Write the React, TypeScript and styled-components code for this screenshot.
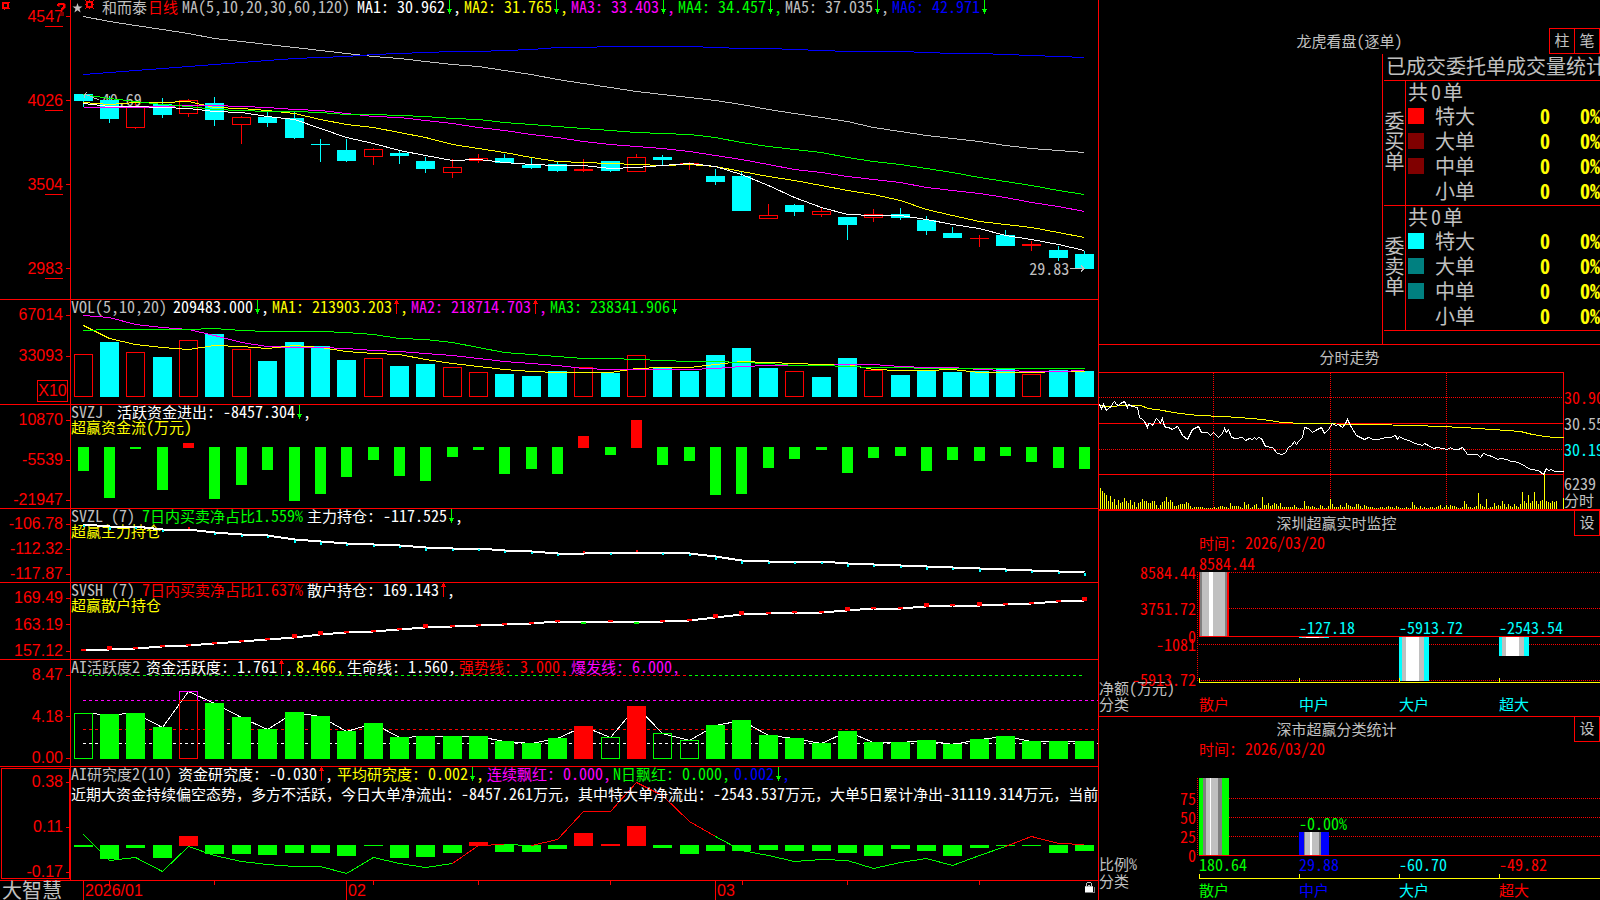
import React from "react";
import styled, { createGlobalStyle } from "styled-components";

const C = {
  red: "#ff0000",
  green: "#00ff00",
  cyan: "#00ffff",
  yellow: "#ffff00",
  magenta: "#ff00ff",
  blue: "#0000ff",
  gray: "#c0c0c0",
  dim: "#808080",
  white: "#ffffff",
};

const CJK = `"Noto Sans CJK SC", sans-serif`;

const GlobalStyle = createGlobalStyle`
  *, *::before, *::after { box-sizing: border-box; }
  html, body { margin: 0; padding: 0; background: #000; }
  body { color: ${C.gray}; font-family: ${CJK}; font-size: 15px; line-height: 13px; overflow: hidden; }
`;

/* ---------- text ---------- */

const Latin = styled.span`
  font-size: 16px;
  line-height: 13px;
  font-feature-settings: "hwid" 1;
`;

const LatinSvg = styled.tspan`
  font-size: 16px;
  font-feature-settings: "hwid" 1;
`;

const runs = (text: string) => text.split(/([\x20-\x7e]+)/).filter(Boolean);
const isLatin = (s: string) => /^[\x20-\x7e]/.test(s);

const Txt = ({ children }: { children: string }) => (
  <>{runs(children).map((r, i) => (isLatin(r) ? <Latin key={i}>{r}</Latin> : r))}</>
);

const SvgText = styled.text`
  font-family: ${CJK};
  font-size: 15px;
  white-space: pre;
`;

type LabelProps = { x: number; y: number; fill: string; end?: boolean; children: string };
const Label = ({ x, y, fill, end, children }: LabelProps) => (
  <SvgText x={x} y={y + 5} fill={fill} textAnchor={end ? "end" : "start"}>
    {runs(children).map((r, i) => (isLatin(r) ? <LatinSvg key={i}>{r}</LatinSvg> : r))}
  </SvgText>
);

/* ---------- page layout ---------- */

const Page = styled.main`
  display: grid;
  grid-template-columns: minmax(0, 1098fr) minmax(0, 502fr);
  height: 100vh;
  background: #000;
`;

const Charts = styled.div`
  display: grid;
  grid-template-rows:
    minmax(0, 300fr) minmax(0, 105fr) minmax(0, 104fr) minmax(0, 74fr)
    minmax(0, 77fr) minmax(0, 107fr) minmax(0, 114fr) minmax(0, 19fr);
  min-width: 0;
`;

const Side = styled.aside`
  display: grid;
  grid-template-rows: minmax(0, 345fr) minmax(0, 166fr) minmax(0, 206fr) minmax(0, 183fr);
  min-width: 0;
  border-left: 1px solid ${C.red};
`;

const Panel = styled.section`
  display: grid;
  grid-template-columns: 71px minmax(0, 1fr);
  min-height: 0;
  border-bottom: 1px solid ${C.red};
`;

const Axis = styled.div<{ $top: number; $bottom: number; $boxed?: boolean }>`
  position: relative;
  display: flex;
  flex-direction: column;
  justify-content: space-between;
  min-height: 0;
  padding: ${(p) => p.$top}px 0 ${(p) => p.$bottom}px;
  border-right: 1px solid ${C.red};
  outline: ${(p) => (p.$boxed ? `1px solid ${C.red}` : "none")};
  outline-offset: -2px;
`;

const AxisGroup = styled.div`
  display: flex;
  flex-direction: column;
  gap: 25px;
`;

const Tick = styled.div`
  display: flex;
  align-items: center;
  justify-content: flex-end;
  gap: 3px;
  height: 16px;
  color: ${C.red};
  font: 16px/16px "Liberation Sans", Arial, sans-serif;
  &::after {
    content: "";
    width: 4px;
    height: 1px;
    background: ${C.red};
  }
`;

const Cents = styled.span`
  height: 18px;
  border-bottom: 1px solid ${C.red};
`;
const Whole = styled.span`
  display: flex;
  height: 14px;
`;

const Unit = styled.div`
  align-self: flex-end;
  width: 31px;
  height: 22px;
  margin-right: 2px;
  border: 1px solid ${C.red};
  color: ${C.red};
  font: 16px/20px "Liberation Sans", Arial, sans-serif;
  text-align: center;
`;

const CornerIcons = styled.svg`
  position: absolute;
  top: 0;
  left: 0;
`;

const Plot = styled.div`
  position: relative;
  display: grid;
  grid-template: minmax(0, 1fr) / minmax(0, 1fr);
  min-width: 0;
`;

const Canvas = styled.svg`
  grid-area: 1 / 1;
  position: relative;
  display: block;
  width: 100%;
  height: 100%;
  shape-rendering: crispEdges;
`;

const Head = styled.header`
  grid-area: 1 / 1;
  position: relative;
  align-self: start;
  white-space: pre;
`;

const Legend = styled.div`
  display: flex;
  height: 15px;
`;

const Entry = styled.span<{ $w: number; $c: string }>`
  flex: none;
  display: flex;
  width: ${(p) => p.$w}px;
  height: 15px;
  color: ${(p) => p.$c};
`;

const Caption = styled.div`
  height: 15px;
  color: ${C.yellow};
`;

const Message = styled.p`
  height: 15px;
  margin: 5px 0 0;
  color: ${C.white};
`;

const Price = styled.span<{ $x: number; $y: number }>`
  position: absolute;
  left: ${(p) => p.$x}%;
  top: ${(p) => p.$y}%;
  white-space: pre;
`;

const Arrow = ({ up }: { up?: boolean }) => (
  <svg width="8" height="14" viewBox="0 0 8 14" shapeRendering="crispEdges">
    {up ? (
      <path d="M4 0h1v1h1v2h1v1H5v10H4V4H2V3h1V1h1z" fill={C.red} />
    ) : (
      <path d="M4 0h1v9h2v1H6v2H5v2H4v-2H3v-2H2V9h2z" fill={C.green} />
    )}
  </svg>
);

type Item = { w: number; c: string; t: string; dir?: "up" | "down"; tail?: string };
const Entries = ({ items }: { items: Item[] }) => (
  <>
    {items.map((it) => (
      <Entry key={it.t} $w={it.w} $c={it.c}>
        <span>
          <Txt>{it.t}</Txt>
        </span>
        {it.dir && <Arrow up={it.dir === "up"} />}
        {it.tail && (
          <span>
            <Txt>{it.tail}</Txt>
          </span>
        )}
      </Entry>
    ))}
  </>
);

/* ---------- chart primitives ---------- */

const cx = (i: number) => Math.floor(83.21 + i * 26.35);

type Pt = [number, number];
const Poly = ({ pts, c, w = 1 }: { pts: Pt[]; c: string; w?: number }) => (
  <polyline
    points={pts.map(([i, y]) => `${cx(i) + 0.5},${y + 0.5}`).join(" ")}
    fill="none"
    stroke={c}
    strokeWidth={w}
  />
);
const series = (ys: number[], from = 0): Pt[] => ys.map((y, i) => [i + from, y]);

const Bar = ({ i, y0, y1, c, hollow, w = 19 }: { i: number; y0: number; y1: number; c: string; hollow?: boolean; w?: number }) => {
  const x = cx(i) - (w - 1) / 2;
  return hollow ? (
    <rect x={x + 0.5} y={y0 + 0.5} width={w - 1} height={y1 - y0 - 1} fill="none" stroke={c} />
  ) : (
    <rect x={x} y={y0} width={w} height={y1 - y0} fill={c} />
  );
};

const Chart = ({ top, height, children }: { top: number; height: number; children: React.ReactNode }) => (
  <Canvas viewBox={`71 ${top} 1027 ${height}`} preserveAspectRatio="none">
    {children}
  </Canvas>
);

/* ---------- data ---------- */

/* rise (1) or fall (0), body top, body bottom, high, low */
const candles: number[][] = [
  [0, 94, 101, 94, 107], [0, 100, 119, 96, 123], [1, 107, 128, 103, 129], [0, 104, 115, 98, 118],
  [1, 100, 114, 99, 117], [0, 103, 120, 97, 126], [1, 117, 125, 116, 144], [0, 117, 123, 112, 127],
  [0, 118, 138, 112, 139], [0, 144, 145, 139, 162], [0, 150, 161, 139, 162], [1, 149, 157, 148, 165],
  [0, 153, 156, 151, 164], [0, 161, 169, 157, 173], [1, 167, 173, 159, 178], [1, 158, 161, 154, 163],
  [0, 158, 163, 154, 163], [0, 165, 168, 158, 169], [0, 164, 171, 162, 172], [1, 169, 171, 159, 172],
  [0, 161, 171, 161, 172], [1, 157, 172, 154, 172], [0, 157, 160, 155, 165], [1, 163, 164, 162, 170],
  [0, 176, 182, 169, 185], [0, 176, 211, 172, 211], [1, 215, 219, 204, 219], [0, 205, 212, 204, 216],
  [1, 211, 215, 207, 217], [0, 217, 225, 217, 240], [1, 214, 218, 209, 222], [0, 214, 218, 208, 220],
  [0, 220, 231, 216, 235], [0, 233, 238, 227, 238], [1, 238, 239, 235, 247], [0, 235, 246, 230, 246],
  [1, 244, 246, 241, 251], [0, 250, 258, 246, 261], [0, 254, 269, 251, 269],
];

const ma60 = series([16, 21, 25, 29, 33, 38, 41, 44, 47, 50, 53, 56, 58, 61, 64, 66, 70, 74, 79, 83, 87, 91, 94, 97, 100, 104, 109, 113, 117, 121, 127, 131, 135, 138, 141, 145, 148, 150, 152]);
const ma120 = series([74, 72, 70, 68, 66, 64, 62, 60, 58, 57, 56, 54, 53, 52, 51, 51, 50, 49, 47, 47, 46, 46, 46, 46, 47, 48, 48, 49, 50, 51, 51, 51, 52, 53, 53, 54, 55, 56, 57]);
const ma30 = series([94, 98, 101, 104, 106, 109, 110, 111, 111, 112, 114, 114, 115, 116, 118, 119, 122, 124, 126, 128, 130, 132, 133, 134, 137, 142, 146, 149, 152, 157, 161, 164, 168, 172, 177, 181, 185, 190, 194]);
const ma20 = series([107, 107, 107, 106, 105, 105, 106, 107, 109, 110, 113, 116, 117, 120, 123, 127, 130, 134, 137, 141, 144, 146, 148, 151, 155, 159, 164, 169, 172, 176, 179, 182, 187, 190, 193, 197, 202, 206, 211]);
const ma10 = series([102, 104, 102, 102, 101, 107, 108, 110, 113, 119, 124, 127, 132, 137, 144, 148, 152, 157, 161, 162, 163, 164, 165, 164, 166, 171, 176, 180, 185, 190, 194, 200, 209, 215, 221, 224, 227, 232, 237]);
const ma5 = series([103, 106, 106, 107, 108, 111, 112, 116, 119, 128, 137, 143, 150, 155, 160, 159, 162, 164, 165, 165, 168, 167, 165, 163, 166, 174, 185, 197, 207, 214, 215, 215, 219, 224, 228, 235, 239, 244, 250]);

const volTop = [354, 342, 352, 357, 340, 334, 349, 361, 342, 346, 360, 358, 366, 364, 367, 372, 374, 376, 371, 367, 373, 355, 368, 371, 355, 348, 368, 371, 377, 358, 370, 375, 371, 372, 371, 369, 374, 370, 371];
const volRise = [0, 2, 4, 6, 11, 14, 15, 19, 21, 27, 30, 36];
const vol5 = series([325, 338, 344, 347, 349, 345, 346, 348, 345, 347, 351, 353, 354, 359, 363, 366, 369, 371, 372, 372, 372, 368, 367, 367, 364, 361, 362, 363, 364, 364, 369, 370, 370, 369, 372, 372, 372, 371, 371]);
const vol10 = series([315, 317, 324, 327, 329, 335, 342, 346, 347, 347, 348, 350, 351, 353, 355, 358, 361, 363, 365, 368, 369, 369, 369, 369, 368, 366, 365, 365, 365, 364, 364, 366, 367, 367, 369, 370, 371, 371, 370]);
const vol20 = series([330, 329, 329, 329, 329, 328, 330, 331, 331, 331, 332, 334, 338, 339, 342, 347, 352, 354, 356, 358, 358, 359, 360, 361, 361, 362, 363, 365, 365, 366, 367, 367, 368, 368, 368, 368, 368, 368, 368]);

const flow = [471, 498, 449, 490, 443, 499, 485, 470, 501, 494, 477, 460, 476, 481, 457, 450, 474, 469, 474, 436, 455, 420, 465, 461, 495, 494, 468, 459, 450, 473, 458, 456, 471, 460, 461, 456, 462, 468, 469];

const mainHold = [524, 526, 526, 529, 529, 532, 534, 535, 539, 541, 543, 544, 545, 547, 548, 548, 550, 551, 553, 553, 552, 552, 552, 553, 556, 560, 561, 561, 561, 563, 564, 565, 566, 567, 568, 569, 570, 571, 572];
const retailHold = [650, 649, 648, 646, 645, 643, 641, 639, 637, 634, 632, 631, 629, 627, 626, 625, 624, 623, 621, 621, 621, 621, 621, 620, 617, 614, 613, 612, 612, 610, 608, 608, 606, 605, 605, 604, 603, 601, 600];
const bigStep = [1, 8, 9, 13, 24, 25, 29, 32, 34, 38];

const active = [713, 714, 713, 727, 691, 703, 717, 729, 712, 716, 731, 723, 737, 736, 736, 736, 741, 743, 738, 726, 737, 706, 733, 740, 725, 720, 735, 738, 743, 731, 742, 742, 740, 744, 739, 736, 741, 741, 741];
const activeHollow = [0, 20, 22, 23];

const study = [847, 859, 848, 858, 836, 854, 854, 855, 853, 853, 856, 846, 858, 857, 853, 842, 852, 852, 849, 833, 844, 826, 848, 854, 851, 851, 850, 851, 851, 853, 856, 849, 851, 856, 848, 846, 846, 853, 851];
const studyLine = [834, 860, 857, 871, 846, 855, 861, 864, 866, 866, 873, 857, 863, 867, 863, 845, 844, 845, 839, 811, 811, 782, 795, 821, 836, 850, 855, 861, 859, 860, 868, 862, 858, 865, 855, 846, 836, 843, 844];
const studySegs: [number, number, string][] = [
  [0, 14, C.green], [14, 16, C.red], [16, 17, C.green], [17, 24, C.red], [24, 35, C.green], [35, 38, C.red],
];

const minutePrice = "12,193 18,205 24,193 34,211 42,202 48,199 52,188 58,184 64,193 70,196 76,190 88,184 95,200 100,193 110,199 125,200 133,230 140,236 146,243 156,260 160,250 166,248 172,254 182,235 190,240 195,250 200,230 205,250 210,260 220,260 230,268 245,258 252,266 262,284 275,296 284,278 292,268 308,259 318,276 335,275 345,284 355,276 368,290 380,280 386,263 392,275 400,268 408,290 420,294 440,290 450,300 462,293 470,297 476,290 482,297 488,290 498,294 503,306 510,318 530,322 545,338 560,343 570,335 580,320 588,316 597,303 604,313 610,303 620,290 628,260 640,263 652,276 666,266 678,260 688,280 700,268 710,250 720,256 728,252 740,260 750,250 757,238 768,262 782,284 795,290 808,298 820,292 835,297 850,298 870,290 885,290 900,284 905,296 912,287 920,295 940,299 960,308 980,316 987,308 1000,314 1015,324 1025,320 1055,328 1065,320 1075,327 1090,327 1102,320 1110,334 1117,343 1145,343 1155,352 1165,338 1180,346 1190,348 1205,356 1215,354 1235,358 1245,363 1258,363 1275,368 1290,378 1304,387 1330,389 1345,402 1352,383 1360,390 1368,388 1378,394 1404,393";
const minuteAvg = "12,196 30,199 60,198 70,196 135,196 160,205 205,209 215,213 255,218 310,225 380,228 430,231 500,236 560,246 625,250 820,251 960,254 1105,260 1190,267 1275,272 1310,281 1350,287 1375,292 1404,292";
const toPage = (s: string) =>
  s
    .split(" ")
    .map((p) => p.split(",").map(Number))
    .map(([x, y]) => `${Math.round(1095 + x / 3) + 0.5},${Math.round(340 + y / 3) + 0.5}`)
    .join(" ");

const minuteVol = [
  21, 18, 16, 14, 8, 13, 7, 10, 4, 9, 6, 7, 11, 8, 6, 9, 4, 7, 2, 6, 7, 10, 8, 8, 6, 6, 8, 8, 4, 1, 4, 7, 8, 12, 7, 9, 7, 3, 3, 4, 5, 5, 5, 7, 6, 3,
  1, 2, 2, 2, 2, 2, 1, 1, 1, 1, 1, 2, 1, 2, 3, 3, 2, 2, 1, 6, 3, 3, 3, 3, 2, 1, 7, 4, 5, 1, 2, 4, 5, 1, 1, 12, 4, 4, 6, 3, 4, 6, 5, 3, 6, 2, 2, 2, 2,
  2, 2, 4, 2, 1, 1, 1, 8, 3, 3, 2, 3, 2, 1, 1, 4, 3, 1, 1, 3, 10, 5, 2, 2, 2, 4, 2, 2, 6, 4, 3, 2, 2, 5, 5, 3, 1, 4, 3, 2, 2, 2, 1, 1, 1, 2, 2, 1, 2,
  3, 2, 2, 1, 3, 2, 1, 1, 1, 2, 1, 1, 7, 4, 2, 1, 3, 1, 2, 1, 1, 2, 2, 1, 2, 3, 4, 1, 2, 4, 2, 4, 3, 3, 2, 1, 1, 2, 8, 5, 2, 2, 1, 2, 3, 16, 5, 3, 2, 10, 1,
  2, 2, 6, 3, 4, 3, 8, 5, 2, 5, 3, 2, 5, 3, 2, 5, 17, 8, 6, 14, 6, 8, 17, 8, 5, 8, 9, 35, 8, 7, 6, 8, 7, 8,
];

/* ---------- left panels ---------- */

const MainPanel = () => (
  <Panel>
    <Axis $top={8} $bottom={23}>
      <CornerIcons width="70" height="16" viewBox="0 0 70 16" shapeRendering="crispEdges">
        <path d="M2 2h7v7H2zM4 4v3h3V4z" fill={C.red} fillRule="evenodd" />
        <path d="M9 2h1v1H9zM9 8h1v1H9zM4 9h1v1H4z" fill={C.red} />
        <path d="M59 7V5q0-1 2-1h2q2 0 2 2t-2 3l-1 2M61 13h2v2h-2z" fill="none" stroke="#800000" strokeWidth="2" />
        <path d="M58 6V5q0-1 2-1h2q2 0 2 2t-2 3l-1 2" fill="none" stroke={C.red} strokeWidth="2" />
      </CornerIcons>
      {["4547", "4026", "3504", "2983"].map((v) => (
        <Tick key={v}>
          <Whole>
            <span>{v.slice(0, 2)}</span>
            <Cents>{v.slice(2)}</Cents>
          </Whole>
        </Tick>
      ))}
    </Axis>
    <Plot>
      <Price $x={3} $y={31}>
        <Txt>40.69</Txt>
      </Price>
      <Price $x={93.3} $y={87.7}>
        <Txt>29.83</Txt>
      </Price>
      <Chart top={0} height={299}>
        {candles.map(([rise, y0, y1, hi, lo], i) => {
          const c = rise ? C.red : C.cyan;
          return (
            <g key={i}>
              <rect x={cx(i)} y={hi} width={1} height={Math.max(0, y0 - hi)} fill={c} />
              <rect x={cx(i)} y={y1} width={1} height={Math.max(0, lo - y1)} fill={c} />
              <Bar i={i} y0={y0} y1={y1} c={c} hollow={!!rise && y1 - y0 > 2} />
            </g>
          );
        })}
        <Poly pts={ma60} c={C.gray} />
        <Poly pts={ma120} c={C.blue} />
        <Poly pts={ma10} c={C.yellow} />
        <Poly pts={ma20} c={C.magenta} />
        <Poly pts={ma30} c={C.green} />
        <Poly pts={ma5} c={C.white} />
        <path d="M84.5 97.5v-3l2-2M84.5 94.5l5 1 5 3 5 1M1070 268.5h14l-3-3M1084 268.5l-3 3" fill="none" stroke={C.gray} />
      </Chart>
      <Head>
        <Legend>
          <Entry $w={31} $c={C.gray}>
            <svg width="31" height="15" viewBox="0 0 31 15">
              <path d="M6.500 3l1.200 3.400h3.800L8.500 8.700l1.100 3.700L6.500 10.200l-3.100 2.200 1.100-3.700L1.500 6.400h3.800z" fill={C.gray} />
              <path d="M15 1h7v7h-7zM17 3v3h3V3z" fill={C.red} fillRule="evenodd" />
              <path d="M14 0h1v1h-1zM22 0h1v1h-1zM14 8h1v1h-1zM22 8h1v1h-1zM18 0h1v1h-1zM18 8h1v1h-1zM14 4h1v1h-1zM22 4h1v1h-1z" fill={C.red} />
            </svg>
          </Entry>
          <Entries
            items={[
              { w: 46, c: C.gray, t: "和而泰" },
              { w: 34, c: C.red, t: "日线" },
              { w: 175, c: C.gray, t: "MA(5,10,20,30,60,120)" },
              { w: 107, c: C.white, t: "MA1: 30.962", dir: "down", tail: "," },
              { w: 107, c: C.yellow, t: "MA2: 31.765", dir: "down", tail: "," },
              { w: 107, c: C.magenta, t: "MA3: 33.403", dir: "down", tail: "," },
              { w: 107, c: C.green, t: "MA4: 34.457", dir: "down", tail: "," },
              { w: 107, c: C.gray, t: "MA5: 37.035", dir: "down", tail: "," },
              { w: 107, c: C.blue, t: "MA6: 42.971", dir: "down" },
            ]}
          />
        </Legend>
      </Head>
    </Plot>
  </Panel>
);

const VolumePanel = () => (
  <Panel>
    <Axis $top={7} $bottom={2}>
      <AxisGroup>
        <Tick>67014</Tick>
        <Tick>33093</Tick>
      </AxisGroup>
      <Unit>X10</Unit>
    </Axis>
    <Plot>
      <Chart top={300} height={104}>
        {volTop.map((y, i) => {
          const rise = volRise.includes(i);
          return <Bar key={i} i={i} y0={y} y1={397} c={rise ? C.red : C.cyan} hollow={rise} />;
        })}
        <Poly pts={vol5} c={C.yellow} />
        <Poly pts={vol10} c={C.magenta} />
        <Poly pts={vol20} c={C.green} />
      </Chart>
      <Head>
        <Legend>
          <Entries
            items={[
              { w: 102, c: C.gray, t: "VOL(5,10,20)" },
              { w: 99, c: C.white, t: "209483.000", dir: "down", tail: "," },
              { w: 139, c: C.yellow, t: "MA1: 213903.203", dir: "up", tail: "," },
              { w: 139, c: C.magenta, t: "MA2: 218714.703", dir: "up", tail: "," },
              { w: 139, c: C.green, t: "MA3: 238341.906", dir: "down" },
            ]}
          />
        </Legend>
      </Head>
    </Plot>
  </Panel>
);

const FlowPanel = () => (
  <Panel>
    <Axis $top={7} $bottom={0}>
      <Tick>10870</Tick>
      <Tick>-5539</Tick>
      <Tick>-21947</Tick>
    </Axis>
    <Plot>
      <Chart top={405} height={103}>
        {flow.map((y, i) =>
          y < 447 ? (
            <Bar key={i} i={i} y0={y} y1={448} c={C.red} w={11} />
          ) : (
            <Bar key={i} i={i} y0={447} y1={y} c={C.green} w={11} />
          ),
        )}
      </Chart>
      <Head>
        <Legend>
          <Entries
            items={[
              { w: 46, c: C.gray, t: "SVZJ" },
              { w: 300, c: C.white, t: "活跃资金进出: -8457.304", dir: "down", tail: "," },
            ]}
          />
        </Legend>
        <Caption>
          <Txt>超赢资金流(万元)</Txt>
        </Caption>
      </Head>
    </Plot>
  </Panel>
);

const MainHoldPanel = () => (
  <Panel>
    <Axis $top={7} $bottom={0}>
      <Tick>-106.78</Tick>
      <Tick>-112.32</Tick>
      <Tick>-117.87</Tick>
    </Axis>
    <Plot>
      <Head>
        <Legend>
          <Entries
            items={[
              { w: 71, c: C.gray, t: "SVZL (7)" },
              { w: 165, c: C.green, t: "7日内买卖净占比1.559%" },
              { w: 300, c: C.white, t: "主力持仓: -117.525", dir: "down", tail: "," },
            ]}
          />
        </Legend>
        <Caption>超赢主力持仓</Caption>
      </Head>
      <Chart top={509} height={73}>
        <Poly pts={series(mainHold)} c={C.white} w={2} />
        {mainHold.map((y, i) =>
          [4, 19, 21].includes(i) ? (
            <rect key={i} x={cx(i)} y={y - 2} width={2} height={2} fill={C.red} />
          ) : (
            <rect key={i} x={cx(i)} y={y + 1} width={2} height={bigStep.includes(i) ? 3 : 2} fill={C.cyan} />
          ),
        )}
      </Chart>
    </Plot>
  </Panel>
);

const RetailHoldPanel = () => (
  <Panel>
    <Axis $top={7} $bottom={0}>
      <Tick>169.49</Tick>
      <Tick>163.19</Tick>
      <Tick>157.12</Tick>
    </Axis>
    <Plot>
      <Chart top={583} height={76}>
        <Poly pts={series(retailHold)} c={C.white} w={2} />
        {retailHold.map((y, i) => {
          const h = bigStep.includes(i) ? 4 : 2;
          const down = i === 19 || i === 21;
          return <rect key={i} x={cx(i) - 2} y={down ? y + 1 : y + 1 - h} width={5} height={h} fill={down ? C.green : C.red} />;
        })}
      </Chart>
      <Head>
        <Legend>
          <Entries
            items={[
              { w: 71, c: C.gray, t: "SVSH (7)" },
              { w: 165, c: C.red, t: "7日内买卖净占比1.637%" },
              { w: 300, c: C.white, t: "散户持仓: 169.143", dir: "up", tail: "," },
            ]}
          />
        </Legend>
        <Caption>超赢散户持仓</Caption>
      </Head>
    </Plot>
  </Panel>
);

const ActivePanel = () => (
  <Panel>
    <Axis $top={7} $bottom={0}>
      <Tick>8.47</Tick>
      <Tick>4.18</Tick>
      <Tick>0.00</Tick>
    </Axis>
    <Plot>
      <Chart top={660} height={106}>
        {[
          [675, C.green],
          [700, C.magenta],
          [729, C.red],
          [743, C.white],
        ].map(([y, c]) => (
          <line key={y} x1={83} x2={y === 675 ? 1084 : 1098} y1={+y + 0.5} y2={+y + 0.5} stroke={c as string} strokeDasharray="3 3" />
        ))}
        <line x1={557} x2={688} y1={675.5} y2={675.5} stroke={C.red} strokeDasharray="3 3" />
        <Poly pts={series(active)} c={C.white} />
        {active.map((y, i) =>
          i === 4 ? (
            <g key={i}>
              <Bar i={i} y0={691} y1={701} c={C.magenta} hollow />
              <Bar i={i} y0={700} y1={759} c={C.red} hollow />
            </g>
          ) : (
            <Bar key={i} i={i} y0={y} y1={759} c={i === 19 || i === 21 ? C.red : C.green} hollow={activeHollow.includes(i)} />
          ),
        )}
      </Chart>
      <Head>
        <Legend>
          <Entries
            items={[
              { w: 75, c: C.gray, t: "AI活跃度2" },
              { w: 150, c: C.white, t: "资金活跃度: 1.761", dir: "up", tail: "," },
              { w: 51, c: C.yellow, t: "8.466," },
              { w: 112, c: C.white, t: "生命线: 1.560," },
              { w: 112, c: C.red, t: "强势线: 3.000," },
              { w: 112, c: C.magenta, t: "爆发线: 6.000," },
            ]}
          />
        </Legend>
      </Head>
    </Plot>
  </Panel>
);

const StudyPanel = () => (
  <Panel>
    <Axis $top={7} $bottom={0} $boxed>
      <Tick>0.38</Tick>
      <Tick>0.11</Tick>
      <Tick>-0.17</Tick>
    </Axis>
    <Plot>
      <Chart top={767} height={113}>
        {study.map((y, i) =>
          y < 845 ? (
            <Bar key={i} i={i} y0={y} y1={846} c={C.red} />
          ) : (
            <Bar key={i} i={i} y0={845} y1={y} c={C.green} />
          ),
        )}
        {studySegs.map(([a, b, c]) => (
          <Poly key={a} pts={series(studyLine.slice(a, b + 1), a)} c={c} />
        ))}
      </Chart>
      <Head>
        <Legend>
          <Entries
            items={[
              { w: 107, c: C.gray, t: "AI研究度2(10)" },
              { w: 159, c: C.white, t: "资金研究度: -0.030", dir: "up", tail: "," },
              { w: 150, c: C.yellow, t: "平均研究度: 0.002", dir: "down", tail: "," },
              { w: 126, c: C.magenta, t: "连续飘红: 0.000," },
              { w: 121, c: C.green, t: "N日飘红: 0.000," },
              { w: 70, c: C.blue, t: "0.002", dir: "down", tail: "," },
            ]}
          />
        </Legend>
        <Message>
          <Txt>
            近期大资金持续偏空态势，多方不活跃，今日大单净流出：-8457.261万元，其中特大单净流出：-2543.537万元，大单5日累计净出-31119.314万元，当前
          </Txt>
        </Message>
      </Head>
    </Plot>
  </Panel>
);

const TimeRow = styled.footer`
  display: grid;
  grid-template-columns: 71px minmax(0, 1fr);
  min-height: 0;
`;
const Brand = styled.div`
  padding-left: 2px;
  font-size: 20px;
  line-height: 17px;
  white-space: nowrap;
`;
const Months = styled.div`
  grid-area: 1 / 1;
  display: grid;
  grid-template-columns: 263fr 369fr 383fr;
  margin-left: 12px;
`;
const Month = styled.div`
  display: flex;
  justify-content: space-between;
  border-left: 1px solid ${C.red};
  padding-left: 1px;
  color: ${C.red};
  font: 16px/19px "Liberation Sans", Arial, sans-serif;
`;

const TimeAxis = () => (
  <TimeRow>
    <Brand>大智慧</Brand>
    <Plot>
      <Chart top={881} height={19}>
        {[109, 214, 373, 478, 610, 742, 847, 979].map((x) => (
          <rect key={x} x={x} y={881} width={1} height={4} fill={C.red} />
        ))}
      </Chart>
      <Months>
        <Month>2026/01</Month>
        <Month>02</Month>
        <Month>
          03
          <svg width="14" height="14" viewBox="0 0 14 14" shapeRendering="crispEdges">
            <path d="M3 1h4v1H3zM2 2h1v3H2zM7 2h1v3H7zM4 4h2v1H4z" fill={C.gray} />
            <path d="M10 6h1v6H1v-1h9z" fill={C.dim} />
            <path d="M1 5h8v6H1z" fill={C.white} />
            <path d="M1 5h8v1H1z" fill={C.gray} />
          </svg>
        </Month>
      </Months>
    </Plot>
  </TimeRow>
);

/* ---------- right column ---------- */

const SideBox = styled.section<{ $line?: number }>`
  display: flex;
  flex-direction: column;
  min-height: 0;
  min-width: 0;
  border-bottom: ${(p) => p.$line ?? 1}px solid ${C.red};
`;

const TitleBar = styled.header<{ $h: number; $centered?: boolean }>`
  display: grid;
  grid-template-columns: ${(p) => (p.$centered ? "1fr auto 1fr" : "1fr auto")};
  align-items: center;
  flex: none;
  height: ${(p) => p.$h}px;
  ${(p) => p.$centered && "& > h2 { grid-column: 2; }"}
`;

const Title = styled.h2`
  margin: 0;
  padding-bottom: 2px;
  font-size: 15px;
  line-height: 15px;
  font-weight: 400;
  text-align: center;
  white-space: pre;
`;

const Tools = styled.div`
  display: flex;
  justify-content: flex-end;
  align-self: start;
`;

const ToolButton = styled.button`
  width: 26px;
  height: 26px;
  padding: 0 0 3px;
  border: 1px solid ${C.red};
  background: #000;
  color: ${C.gray};
  font: 15px/15px ${CJK};
  & + & {
    margin-left: -1px;
  }
`;

const SetButton = styled(ToolButton)`
  border-top: 0;
  height: 25px;
`;

const TitleSpace = styled.div`
  flex: none;
  height: 28px;
`;

const Stats = styled.div`
  flex: 1;
  align-self: flex-end;
  width: 218px;
  border-left: 1px solid ${C.red};
  padding-left: 1px;
  font-size: 20px;
  white-space: nowrap;
`;

const StatsTitle = styled.h3`
  height: 26px;
  margin: 0;
  padding-left: 2px;
  font-size: 20px;
  font-weight: 400;
  line-height: 24px;
`;

const StatsTable = styled.table`
  width: 100%;
  border-collapse: separate;
  border-spacing: 0;
  table-layout: fixed;
`;

const Group = styled.tbody`
  tr {
    height: 25px;
  }
  tr:first-child > * {
    border-top: 1px solid ${C.red};
  }
  td {
    padding: 0;
    line-height: 21px;
    vertical-align: top;
  }
`;

const SideHead = styled.th`
  padding: 0 0 4px;
  border-right: 1px solid ${C.red};
  font-weight: 400;
  line-height: 20px;
  white-space: normal;
`;
const Swatch = styled.span<{ $c: string }>`
  display: block;
  width: 16px;
  height: 16px;
  margin: 3px 0 0 2px;
  background: ${(p) => p.$c};
`;
const Num = styled.td`
  color: ${C.yellow};
  font-weight: 700;
  text-align: right;
  font-feature-settings: "hwid" 1;
`;
const Total = styled.td`
  && {
    padding-left: 2px;
  }
  b {
    padding: 0 2px 0 3px;
    font-weight: 400;
    font-feature-settings: "hwid" 1;
  }
`;
const FootCell = styled.td`
  padding: 0;
  border-top: 1px solid ${C.red};
`;

const groups = [
  { name: "委买单", colors: [C.red, "#800000", "#800000", ""] },
  { name: "委卖单", colors: [C.cyan, "#008080", "#008080", ""] },
];

const OrdersPanel = () => (
  <SideBox>
    <TitleSpace />
    <TitleBar $h={26} $centered>
      <Title>
        <Txt>龙虎看盘(逐单)</Txt>
      </Title>
      <Tools>
        <ToolButton type="button">柱</ToolButton>
        <ToolButton type="button">笔</ToolButton>
      </Tools>
    </TitleBar>
    <Stats>
      <StatsTitle id="stats-title">已成交委托单成交量统计</StatsTitle>
      <StatsTable aria-labelledby="stats-title">
        <colgroup>
          <col style={{ width: 22 }} />
          <col style={{ width: 29 }} />
          <col style={{ width: 48 }} />
          <col />
          <col style={{ width: 50 }} />
        </colgroup>
        {groups.map((g) => (
          <Group key={g.name}>
            <tr>
              <SideHead rowSpan={5} scope="rowgroup">
                {[...g.name].map((ch) => (
                  <div key={ch}>{ch}</div>
                ))}
              </SideHead>
              <Total colSpan={4}>
                共<b>0</b>单
              </Total>
            </tr>
            {["特大", "大单", "中单", "小单"].map((label, i) => (
              <tr key={label}>
                <td>{g.colors[i] && <Swatch $c={g.colors[i]} />}</td>
                <td>{label}</td>
                <Num>0</Num>
                <Num>0%</Num>
              </tr>
            ))}
          </Group>
        ))}
        <tfoot>
          <tr>
            <FootCell colSpan={5} />
          </tr>
        </tfoot>
      </StatsTable>
    </Stats>
  </SideBox>
);

const SideCanvas = styled.svg`
  display: block;
  flex: none;
  width: 100%;
  height: auto;
  shape-rendering: crispEdges;
`;

const MinutePanel = () => (
  <SideBox $line={2}>
    <TitleBar $h={25} $centered>
      <Title>分时走势</Title>
    </TitleBar>
    <SideCanvas viewBox="1099 370 501 139">
      <g fill="none" stroke={C.red}>
        <path d="M1099 372.5h464.500V509M1099 423.500h464M1099 474.500h464" />
        <path d="M1099 397.500h464M1099 449.500h464M1213.500 373v136M1330.500 373v136M1446.500 373v136" strokeDasharray="1 1" />
      </g>
      <polyline points={toPage(minuteAvg)} fill="none" stroke={C.yellow} />
      <polyline points={toPage(minutePrice)} fill="none" stroke={C.white} />
      {minuteVol.map((h, i) => (
        <rect key={i} x={1100 + i * 2} y={509 - h} width={1} height={h} fill={C.yellow} />
      ))}
      <rect x={1563} y={498} width={1} height={11} fill={C.yellow} />
      <Label x={1564} y={399} fill={C.red}>30.90</Label>
      <Label x={1564} y={425} fill={C.gray}>30.55</Label>
      <Label x={1564} y={451} fill={C.cyan}>30.19</Label>
      <Label x={1564} y={485} fill={C.gray}>6239</Label>
      <Label x={1564} y={501} fill={C.gray}>分时</Label>
    </SideCanvas>
  </SideBox>
);

const TimeLine = styled.div`
  flex: none;
  height: 18px;
  padding-left: 100px;
  color: ${C.red};
  white-space: pre;
`;

/* a cylinder is a row of vertical colour bands */
const Cylinder = ({ x, y, h, bands }: { x: number; y: number; h: number; bands: [number, string][] }) => {
  let at = x;
  return (
    <g>
      {bands.map(([w, c], i) => {
        const r = <rect key={i} x={at} y={y} width={w} height={h} fill={c} />;
        at += w;
        return r;
      })}
    </g>
  );
};

const cyanBands: [number, string][] = [[3, C.cyan], [4, C.gray], [13, C.white], [5, C.gray], [5, C.cyan]];

const MonitorPanel = () => (
  <SideBox>
    <TitleBar $h={25}>
      <Title>深圳超赢实时监控</Title>
      <Tools>
        <SetButton type="button">设</SetButton>
      </Tools>
    </TitleBar>
    <TimeLine>
      <Txt>时间: 2026/03/20</Txt>
    </TimeLine>
    <SideCanvas viewBox="1099 554 501 162">
      <g fill="none" stroke={C.red}>
        <path d="M1229 572.500h371M1229 608.500h371M1197 644.500h403M1197 680.500h403M1197.500 572v109" strokeDasharray="1 1" />
        <path d="M1199 636.500h401" />
      </g>
      <Cylinder x={1199} y={572} h={64} bands={[[1, C.red], [2, C.dim], [7, C.gray], [4, C.white], [12, C.gray], [2, C.dim], [2, C.red]]} />
      <Cylinder x={1299} y={637} h={1} bands={cyanBands} />
      <Cylinder x={1399} y={637} h={44} bands={cyanBands} />
      <Cylinder x={1499} y={637} h={19} bands={cyanBands} />
      <path d="M1199.500 678v4.500H1600M1299.500 678v4M1399.500 678v4M1499.500 678v4" fill="none" stroke={C.yellow} />
      <Label x={1099} y={689} fill={C.gray}>净额(万元)</Label>
      <Label x={1199} y={565} fill={C.red}>8584.44</Label>
      <Label x={1299} y={629} fill={C.cyan}>-127.18</Label>
      <Label x={1399} y={629} fill={C.cyan}>-5913.72</Label>
      <Label x={1499} y={629} fill={C.cyan}>-2543.54</Label>
      <Label x={1196} y={574} fill={C.red} end>8584.44</Label>
      <Label x={1196} y={610} fill={C.red} end>3751.72</Label>
      <Label x={1196} y={638} fill={C.red} end>0</Label>
      <Label x={1196} y={646} fill={C.red} end>-1081</Label>
      <Label x={1196} y={681} fill={C.red} end>-5913.72</Label>
      <Label x={1099} y={705} fill={C.gray}>分类</Label>
      <Label x={1199} y={705} fill={C.red}>散户</Label>
      <Label x={1299} y={705} fill={C.cyan}>中户</Label>
      <Label x={1399} y={705} fill={C.cyan}>大户</Label>
      <Label x={1499} y={705} fill={C.cyan}>超大</Label>
    </SideCanvas>
  </SideBox>
);

const ClassPanel = () => (
  <SideBox $line={0}>
    <TitleBar $h={25}>
      <Title>深市超赢分类统计</Title>
      <Tools>
        <SetButton type="button">设</SetButton>
      </Tools>
    </TitleBar>
    <TimeLine>
      <Txt>时间: 2026/03/20</Txt>
    </TimeLine>
    <SideCanvas viewBox="1099 760 501 140">
      <g fill="none" stroke={C.red}>
        <path d="M1229 798.500h371M1229 817.500h371M1229 836.500h371M1197.500 778v77" strokeDasharray="1 1" />
        <path d="M1199 855.500h401" />
      </g>
      <Cylinder x={1199} y={778} h={77} bands={[[4, C.green], [3, C.dim], [4, C.gray], [1, C.white], [7, C.gray], [4, C.dim], [7, C.green]]} />
      <Cylinder x={1299} y={832} h={23} bands={[[5, C.blue], [1, C.dim], [5, C.gray], [2, C.white], [7, C.gray], [2, C.dim], [8, C.blue]]} />
      <path d="M1199.500 874v4.500H1600M1299.500 874v4M1399.500 874v4M1499.500 874v4" fill="none" stroke={C.yellow} />
      <Label x={1299} y={825} fill={C.green}>-0.00%</Label>
      <Label x={1196} y={800} fill={C.red} end>75</Label>
      <Label x={1196} y={819} fill={C.red} end>50</Label>
      <Label x={1196} y={838} fill={C.red} end>25</Label>
      <Label x={1196} y={857} fill={C.red} end>0</Label>
      <Label x={1199} y={866} fill={C.green}>180.64</Label>
      <Label x={1299} y={866} fill={C.blue}>29.88</Label>
      <Label x={1399} y={866} fill={C.cyan}>-60.70</Label>
      <Label x={1499} y={866} fill={C.red}>-49.82</Label>
      <Label x={1099} y={865} fill={C.gray}>比例%</Label>
      <Label x={1099} y={882} fill={C.gray}>分类</Label>
      <Label x={1199} y={891} fill={C.green}>散户</Label>
      <Label x={1299} y={891} fill={C.blue}>中户</Label>
      <Label x={1399} y={891} fill={C.cyan}>大户</Label>
      <Label x={1499} y={891} fill={C.red}>超大</Label>
    </SideCanvas>
  </SideBox>
);

export default function App() {
  return (
    <>
      <GlobalStyle />
      <Page>
        <Charts>
          <MainPanel />
          <VolumePanel />
          <FlowPanel />
          <MainHoldPanel />
          <RetailHoldPanel />
          <ActivePanel />
          <StudyPanel />
          <TimeAxis />
        </Charts>
        <Side>
          <OrdersPanel />
          <MinutePanel />
          <MonitorPanel />
          <ClassPanel />
        </Side>
      </Page>
    </>
  );
}
